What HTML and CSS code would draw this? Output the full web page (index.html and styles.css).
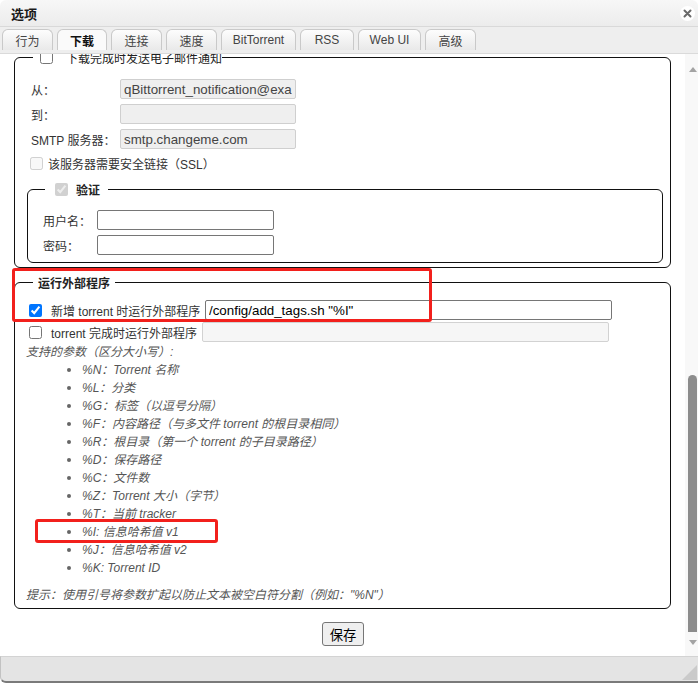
FILE: index.html
```html
<!DOCTYPE html>
<html lang="zh-CN">
<head>
<meta charset="utf-8">
<title>选项</title>
<link rel="stylesheet" href="styles.css">
</head>
<body>
<div class="window">
  <div class="titlebar">
    <span class="title">选项</span>
    <span class="close"><svg width="9" height="9" viewBox="0 0 9 9"><path d="M1.5 1.5 L7.5 7.5 M7.5 1.5 L1.5 7.5" stroke="#6a6a6a" stroke-width="2" stroke-linecap="round"/></svg></span>
  </div>
  <div class="tabs">
    <div class="tab">行为</div>
    <div class="tab active">下载</div>
    <div class="tab">连接</div>
    <div class="tab">速度</div>
    <div class="tab tab-bt">BitTorrent</div>
    <div class="tab tab-rss">RSS</div>
    <div class="tab tab-web">Web UI</div>
    <div class="tab">高级</div>
  </div>
  <div class="main">
    <div class="content">
      <div class="scroll">
        <fieldset class="fs fs-mail">
          <legend class="lg-mail"><span class="lgi"><input type="checkbox" class="cb"><span class="lg-text">下载完成时发送电子邮件通知</span></span></legend>
          <div class="grid-mail">
            <label class="lbl">从：</label><input class="txt dis" type="text" value="qBittorrent_notification@example.com" disabled>
            <label class="lbl">到：</label><input class="txt dis" type="text" value="" disabled>
            <label class="lbl">SMTP 服务器：</label><input class="txt dis" type="text" value="smtp.changeme.com" disabled>
          </div>
          <div class="check-row ssl"><input type="checkbox" class="cb" disabled><span>该服务器需要安全链接（SSL）</span></div>
          <fieldset class="fs fs-auth">
            <legend class="lg-auth"><span class="lgi"><input type="checkbox" class="cb" checked disabled><span class="lg-bold">验证</span></span></legend>
            <div class="grid-auth">
              <label class="lbl">用户名：</label><input class="txt" type="text">
              <label class="lbl">密码：</label><input class="txt" type="password">
            </div>
          </fieldset>
        </fieldset>

        <fieldset class="fs fs-run">
          <legend class="lg-run"><span class="lgi"><span class="lg-bold">运行外部程序</span></span></legend>
          <div class="run-row r1"><input type="checkbox" class="cb" checked><span class="run-label w1">新增 torrent 时运行外部程序</span><input class="txt long" type="text" value="/config/add_tags.sh &quot;%I&quot;"></div>
          <div class="run-row r2"><input type="checkbox" class="cb"><span class="run-label w2">torrent 完成时运行外部程序</span><input class="txt long dis2" type="text" value="" disabled></div>
          <div class="params">支持的参数（区分大小写）:</div>
          <ul class="plist">
            <li>%N：Torrent 名称</li>
            <li>%L：分类</li>
            <li>%G：标签（以逗号分隔）</li>
            <li>%F：内容路径（与多文件 torrent 的根目录相同）</li>
            <li>%R：根目录（第一个 torrent 的子目录路径）</li>
            <li>%D：保存路径</li>
            <li>%C：文件数</li>
            <li>%Z：Torrent 大小（字节）</li>
            <li>%T：当前 tracker</li>
            <li>%I: 信息哈希值 v1</li>
            <li>%J：信息哈希值 v2</li>
            <li>%K: Torrent ID</li>
          </ul>
          <div class="hint">提示：使用引号将参数扩起以防止文本被空白符分割（例如："%N"）</div>
        </fieldset>

        <div class="save-row"><button class="btn" type="button">保存</button></div>
      </div>
      <div class="mark mark1"></div>
      <div class="mark mark2"></div>
    </div>
    <div class="sb">
      <div class="sb-up"><span class="tri-up"></span></div>
      <div class="sb-track"><div class="sb-thumb"></div></div>
      <div class="sb-down"><span class="tri-down"></span></div>
    </div>
  </div>
  <div class="footer"><span class="grip"></span></div>
</div>
</body>
</html>
```

FILE: styles.css
```css
* { box-sizing: border-box; }
html, body { margin: 0; padding: 0; }
body {
  width: 698px;
  height: 683px;
  overflow: hidden;
  background: #fff;
  font-family: "Liberation Sans", "Noto Sans CJK SC", sans-serif;
  font-size: 12px;
  color: #222;
}
.window {
  width: 698px;
  height: 683px;
  display: flex;
  flex-direction: column;
  background: #fff;
  border-radius: 6px 6px 0 0;
  overflow: hidden;
}

/* title bar */
.titlebar {
  flex: none;
  height: 27px;
  display: flex;
  align-items: center;
  justify-content: space-between;
  padding: 0 3px 0 11px;
  background: linear-gradient(#f7f7f7, #ececec);
  border-bottom: 1px solid #d9d9d9;
}
.title { font-weight: bold; font-size: 13px; color: #1a1a1a; }
.close {
  width: 15px;
  height: 15px;
  border-radius: 50%;
  background: #fff;
  display: flex;
  align-items: center;
  justify-content: center;
}

/* tabs */
.tabs {
  flex: none;
  height: 27px;
  display: flex;
  align-items: flex-end;
  gap: 4px;
  padding: 0 0 3px 2px;
  background: #eeeeee;
  border-bottom: 1px solid #dadada;
}
.tab {
  flex: none;
  height: 21px;
  width: 51px;
  display: flex;
  align-items: center;
  justify-content: center;
  border: 1px solid #c9c9c9;
  border-bottom: none;
  border-radius: 6px 6px 0 0;
  background: linear-gradient(#fdfdfd, #e9e9e9);
  color: #444;
  white-space: nowrap;
}
.tab-bt { width: 75px; }
.tab-rss { width: 54px; }
.tab-web { width: 63px; }
.tab.active { width: 50px; background: #fafafa; font-weight: bold; color: #111; }

/* main area */
.main { flex: 1; display: flex; min-height: 0; }
.content {
  flex: 1;
  position: relative;
  overflow: hidden;
  padding: 0 14px;
}
.scroll { margin-top: -5px; }

.fs {
  margin: 0;
  min-width: 0;
  border: 1px solid #111;
  border-radius: 6px;
}
legend { padding: 0; }
.lgi { display: flex; align-items: center; height: 16px; }
.cb { margin: 0; width: 13px; height: 13px; flex: none; }
.lg-bold { font-weight: bold; color: #222; }

.fs-mail { padding: 14px 7px 4px 12px; }
.lg-mail { margin-left: 6px; padding: 0 0 0 7px; }
.lg-mail .lg-text { margin-left: 13px; color: #222; }

.grid-mail {
  display: grid;
  grid-template-columns: 93px 176px;
  grid-auto-rows: 20px;
  row-gap: 5px;
  align-items: center;
}
.lbl { padding-left: 4px; color: #333; }
.txt {
  height: 20px;
  margin: 0;
  padding: 0 3px;
  border: 1px solid #767676;
  border-radius: 2px;
  background: #fff;
  font-family: "Liberation Sans", "Noto Sans CJK SC", sans-serif;
  font-size: 13.33px;
  color: #000;
}
.txt.dis {
  background: #efefef;
  border-color: #cfcfcf;
  color: #444;
}
.check-row { display: flex; align-items: center; height: 20px; }
.ssl { margin-top: 4px; color: #333; }
.ssl .cb { margin-left: 3px; margin-right: 5px; }

.fs-auth { margin-top: 8px; padding: 13px 15px 7px 15px; }
.lg-auth { margin-left: 2px; padding: 0 8px 0 10px; }
.lg-auth .lg-bold { margin-left: 8px; }
.grid-auth {
  display: grid;
  grid-template-columns: 54px 177px;
  grid-auto-rows: 20px;
  row-gap: 5px;
  align-items: center;
}
.grid-auth .lbl { padding-left: 0; }

/* run external program */
.fs-run { margin-top: 6px; padding: 10px 7px 4px 12px; }
.lg-run { margin-left: 6px; padding: 0 5px; }
.run-row { display: flex; align-items: center; height: 20px; color: #333; }
.r2 { margin-top: 2px; }
.run-row .cb { margin-left: 2px; margin-right: 9px; }
.run-label { flex: none; white-space: nowrap; }
.w1 { width: 154px; }
.w2 { width: 151px; }
.txt.long { width: 407px; }
.txt.dis2 { background: #f6f6f6; border-color: #d2d2d2; }

.params {
  margin-top: 1px;
  margin-left: -1px;
  line-height: 18px;
  font-style: italic;
  color: #555;
}
.plist {
  margin: 0;
  padding-left: 55px;
  font-style: italic;
  line-height: 18px;
  color: #555;
}
.plist li::marker { color: #666; font-size: 13px; }
.hint {
  margin-top: 9px;
  margin-left: -1px;
  line-height: 18px;
  font-style: italic;
  color: #555;
}

.save-row { margin-top: 13px; display: flex; justify-content: center; padding-left: 1px; }
.btn {
  height: 24px;
  padding: 0 7px;
  border: 1px solid #767676;
  border-radius: 3px;
  background: #efefef;
  font-family: "Liberation Sans", "Noto Sans CJK SC", sans-serif;
  font-size: 13.33px;
  color: #000;
}

/* annotation marks */
.mark {
  position: absolute;
  border: 3px solid #f2201c;
  border-radius: 3px;
}
.mark1 { left: 12px; top: 214px; width: 420px; height: 54px; }
.mark2 { left: 35px; top: 465px; width: 183px; height: 24px; }

/* scrollbar */
.sb {
  width: 13px;
  flex: none;
  display: flex;
  flex-direction: column;
  background: #f8f8f8;
}
.sb-up { height: 30px; display: flex; align-items: center; justify-content: center; padding-left: 2px; }
.tri-up { width: 0; height: 0; border-left: 4px solid transparent; border-right: 4px solid transparent; border-bottom: 5px solid #a3a3a3; }
.sb-track { flex: 1; display: flex; flex-direction: column; justify-content: flex-end; padding: 0 1px 0 3px; }
.sb-thumb { height: 257px; background: #8c8c8c; border-radius: 5px 5px 0 0; }
.sb-down { height: 24px; display: flex; justify-content: center; padding-top: 8px; padding-left: 2px; }
.tri-down { width: 0; height: 0; border-left: 4px solid transparent; border-right: 4px solid transparent; border-top: 5px solid #a3a3a3; }

/* footer */
.footer {
  flex: none;
  height: 27px;
  display: flex;
  justify-content: flex-end;
  align-items: flex-end;
  background: #e4e4e4;
  border-top: 1px solid #d3d3d3;
  border-left: 1px solid #c2c2c2;
  border-bottom: 2px solid #7a7a7a;
  border-radius: 0 0 0 6px;
}
.grip {
  width: 0;
  height: 0;
  border-left: 15px solid transparent;
  border-bottom: 15px solid #cacaca;
  margin: 0 1px 1px 0;
}
```
